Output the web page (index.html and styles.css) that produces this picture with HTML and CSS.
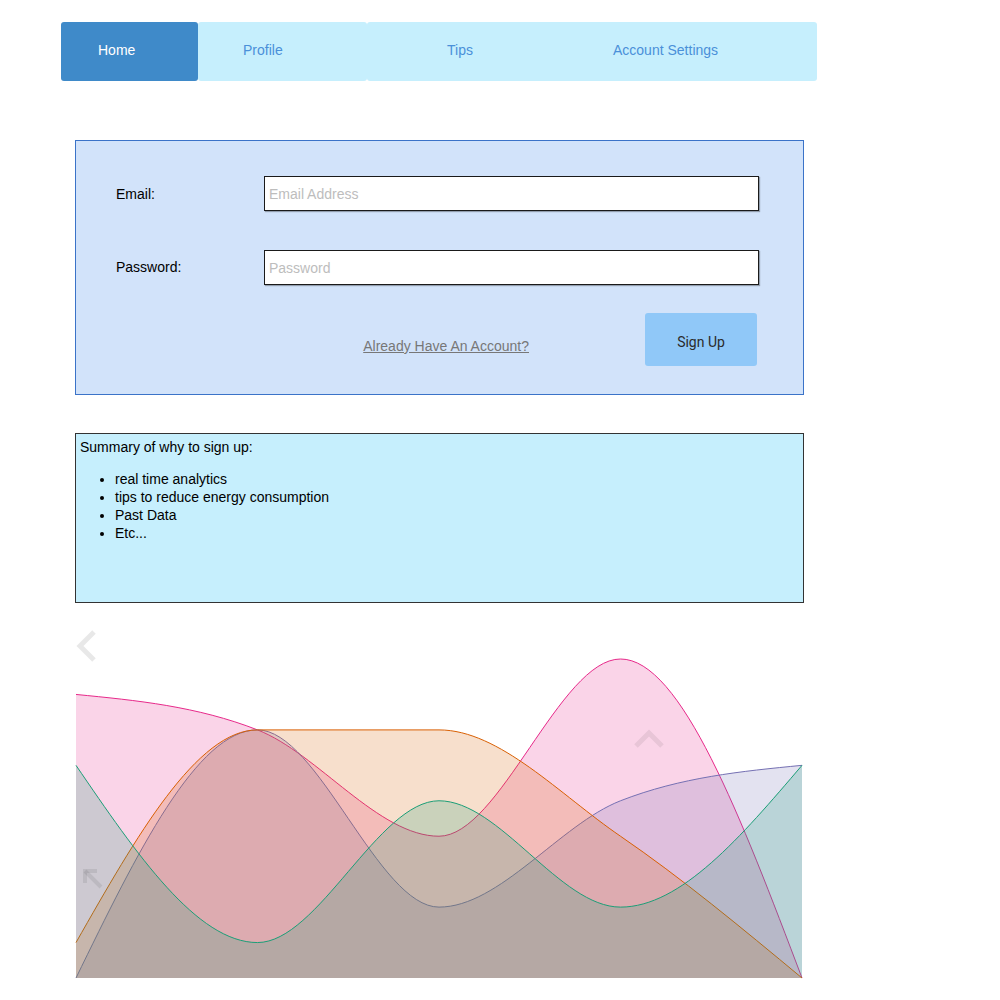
FILE: index.html
```html
<!DOCTYPE html>
<html lang="en">
<head>
<meta charset="utf-8">
<title>Sign Up</title>
<link rel="stylesheet" href="styles.css">
</head>
<body>
<nav class="nav">
  <a class="tab tab-home active" href="#">Home</a>
  <a class="tab tab-profile" href="#">Profile</a>
  <a class="tab tab-tips" href="#">Tips</a>
  <a class="tab tab-account" href="#">Account Settings</a>
</nav>

<form class="signup">
  <div class="field">
    <label class="label" for="email">Email:</label>
    <input class="input" id="email" type="text" placeholder="Email Address">
  </div>
  <div class="field">
    <label class="label" for="password">Password:</label>
    <input class="input" id="password" type="password" placeholder="Password">
  </div>
  <div class="actions">
    <a class="login-link" href="#">Already Have An Account?</a>
    <button class="btn" type="button">Sign Up</button>
  </div>
</form>

<section class="summary">
  <p class="summary-title">Summary of why to sign up:</p>
  <ul class="summary-list">
    <li>real time analytics</li>
    <li>tips to reduce energy consumption</li>
    <li>Past Data</li>
    <li>Etc...</li>
  </ul>
</section>

<div class="chart">
  <svg class="chart-svg" width="726" height="360" viewBox="0 0 726 360">
    <g transform="translate(0,358) scale(181.5,-35.444)">
      <path class="area pink" d="M0,8 C0.3333,7.8333 0.6667,7.6667 1,7 C1.3333,6.3333 1.6667,4 2,4 C2.3333,4 2.6667,9 3,9 C3.3333,9 3.6667,4.5 4,0 L0,0 Z"/>
      <path class="line pink" d="M0,8 C0.3333,7.8333 0.6667,7.6667 1,7 C1.3333,6.3333 1.6667,4 2,4 C2.3333,4 2.6667,9 3,9 C3.3333,9 3.6667,4.5 4,0"/>
      <path class="area purple" d="M0,0 C0.3333,3.5 0.6667,7 1,7 C1.3333,7 1.6667,2 2,2 C2.3333,2 2.6667,4.3333 3,5 C3.3333,5.6667 3.6667,5.8333 4,6 L4,0 L0,0 Z"/>
      <path class="line purple" d="M0,0 C0.3333,3.5 0.6667,7 1,7 C1.3333,7 1.6667,2 2,2 C2.3333,2 2.6667,4.3333 3,5 C3.3333,5.6667 3.6667,5.8333 4,6"/>
      <path class="area orange" d="M0,1 C0.3333,4 0.6667,7 1,7 C1.3333,7 1.6667,7 2,7 C2.3333,7 2.6667,5.1667 3,4 C3.3333,2.8333 3.6667,1.4167 4,0 L0,0 Z"/>
      <path class="line orange" d="M0,1 C0.3333,4 0.6667,7 1,7 C1.3333,7 1.6667,7 2,7 C2.3333,7 2.6667,5.1667 3,4 C3.3333,2.8333 3.6667,1.4167 4,0"/>
      <path class="area green" d="M0,6 C0.3333,3.5 0.6667,1 1,1 C1.3333,1 1.6667,5 2,5 C2.3333,5 2.6667,2 3,2 C3.3333,2 3.6667,4 4,6 L4,0 L0,0 Z"/>
      <path class="line green" d="M0,6 C0.3333,3.5 0.6667,1 1,1 C1.3333,1 1.6667,5 2,5 C2.3333,5 2.6667,2 3,2 C3.3333,2 3.6667,4 4,6"/>
    </g>
  </svg>
  <svg class="ctl ctl-prev" width="22" height="34" viewBox="0 0 22 34">
    <polyline points="18,3 4,17 18,31"/>
  </svg>
  <svg class="ctl ctl-up" width="32" height="22" viewBox="0 0 32 22">
    <polyline points="3,19 16,6 29,19"/>
  </svg>
  <svg class="ctl ctl-expand" width="22" height="22" viewBox="0 0 22 22">
    <polyline points="3,15 3,3 15,3"/>
    <line x1="3" y1="3" x2="19" y2="19"/>
  </svg>
</div>
</body>
</html>
```

FILE: styles.css
```css
* {
  box-sizing: border-box;
}

body {
  margin: 0;
  background: #ffffff;
  font-family: "Liberation Sans", Arial, sans-serif;
  font-size: 14px;
  color: #000;
}

/* Navigation */
.nav {
  display: flex;
  width: 756px;
  height: 59px;
  margin: 22px 0 0 61px;
}

.tab {
  display: flex;
  align-items: center;
  height: 59px;
  padding-bottom: 3px;
  background: #c6effd;
  color: #4a90d9;
  text-decoration: none;
  border-radius: 3px;
}

.tab-home {
  width: 137px;
  padding-left: 37px;
}

.tab-profile {
  width: 169px;
  padding-left: 45px;
}

.tab-tips {
  width: 193px;
  padding-left: 80px;
  border-radius: 3px 0 0 3px;
}

.tab-account {
  width: 257px;
  padding-left: 53px;
  border-radius: 0 3px 3px 0;
}

.tab.active {
  background: #3f8ac9;
  color: #ffffff;
}

/* Sign-up form */
.signup {
  width: 729px;
  margin: 59px 0 0 75px;
  padding: 35px 44px 28px 40px;
  background: #d2e3fa;
  border: 1px solid #3b73c8;
}

.field {
  display: grid;
  grid-template-columns: 148px 495px;
  align-items: center;
  height: 35px;
}

.field + .field {
  margin-top: 39px;
}

.label {
  color: #000;
}

.field + .field .label {
  margin-top: -2px;
}

.input {
  width: 495px;
  height: 35px;
  margin: 0;
  padding: 0 4px;
  border: 1px solid #1a1a1a;
  background: #fff;
  font-family: "Liberation Sans", Arial, sans-serif;
  font-size: 14px;
  color: #000;
  box-shadow: 1px 1px 1px rgba(0, 0, 0, 0.3);
  outline: none;
}

.input::placeholder {
  color: #bdbdbd;
}

.actions {
  display: flex;
  justify-content: flex-end;
  align-items: center;
  margin-top: 28px;
}

.login-link {
  margin-right: 116px;
  margin-top: 13px;
  color: #777777;
  text-decoration: underline;
}

.btn {
  width: 112px;
  height: 53px;
  margin: 0 2px 0 0;
  padding: 4px 0 0;
  border: none;
  border-radius: 3px;
  background: #90c8f8;
  color: #2b2b2b;
  font-family: Roboto, "Liberation Sans", Arial, sans-serif;
  font-size: 14px;
}

/* Summary */
.summary {
  width: 729px;
  height: 170px;
  margin: 38px 0 0 75px;
  padding: 4px;
  background: #c6effd;
  border: 1px solid #333333;
  line-height: 18px;
}

.summary-title {
  margin: 0;
}

.summary-list {
  margin: 14px 0 0;
  padding-left: 35px;
}

/* Chart */
.chart {
  position: relative;
  width: 726px;
  height: 360px;
  margin: 17px 0 0 76px;
}

.chart-svg {
  display: block;
  overflow: visible;
}

.area {
  stroke: none;
  fill-opacity: 0.2;
}

.line {
  fill: none;
  stroke-width: 1px;
  vector-effect: non-scaling-stroke;
}

.area.pink { fill: #e7298a; }
.area.purple { fill: #7570b3; }
.area.orange { fill: #d95f02; }
.area.green { fill: #1b9e77; }

.line.pink { stroke: #e7298a; }
.line.purple { stroke: #7570b3; }
.line.orange { stroke: #d95f02; }
.line.green { stroke: #1b9e77; }

.ctl {
  position: absolute;
  fill: none;
  stroke: #000;
  stroke-opacity: 0.09;
  stroke-width: 5;
}

.ctl-prev {
  left: 0;
  top: 9px;
}

.ctl-up {
  left: 557px;
  top: 107px;
  stroke-opacity: 0.07;
}

.ctl-expand {
  left: 6px;
  top: 248px;
  stroke-width: 4;
  stroke-opacity: 0.08;
}
```
